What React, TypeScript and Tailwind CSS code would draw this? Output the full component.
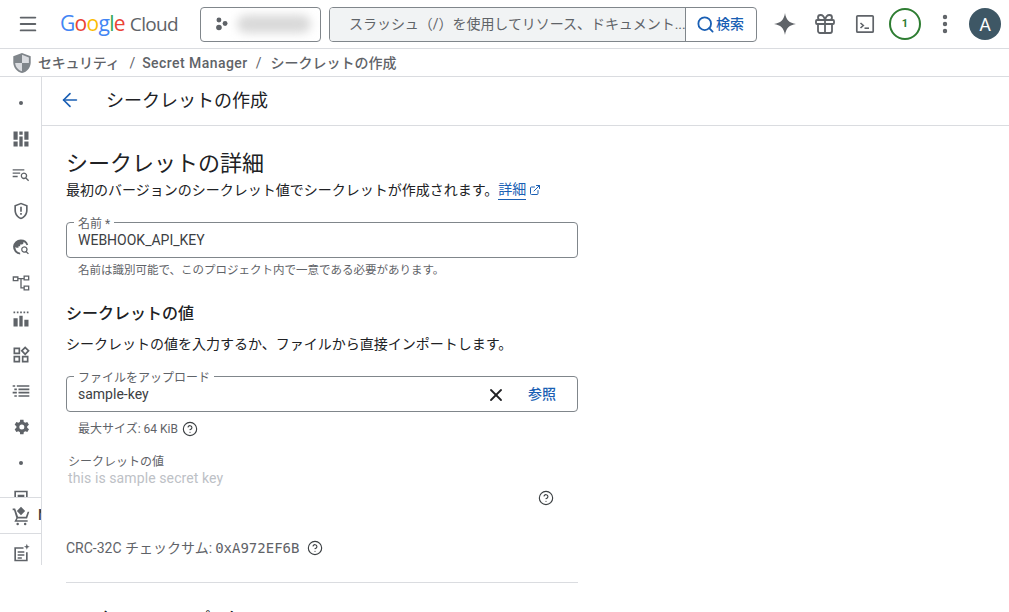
import { ArrowLeft, ExternalLink, Menu, MoreVertical, Search, X, Gift, CircleHelp } from 'lucide-react'

const sans = 'font-["Roboto","Noto_Sans_CJK_JP",sans-serif]'

function RailIcon({ d, className = '' }: { d: string; className?: string }) {
  return (
    <svg viewBox="0 0 24 24" className={`w-[20px] h-[20px] text-[#5f6368] ${className}`} fill="currentColor">
      <path d={d} />
    </svg>
  )
}

function Dot() {
  return <div className="w-[4px] h-[4px] rounded-full bg-[#5f6368]" />
}

const rail = {
  dashboard: 'M3 3h5v10H3zM10 3h4v4h-4zM16 3h5v10h-5zM10 9h4v12h-4zM3 15h5v6H3zM16 15h5v6h-5z',
  listSearch: 'M2 5h14v1.600H2zM2 9h9v1.600H2zM2 13h6v1.600H2zM15.500 9a4 4 0 0 1 3.200 6.400l3 3-1.100 1.100-3-3A4 4 0 1 1 15.500 9zm0 1.600a2.400 2.400 0 1 0 0 4.800 2.400 2.400 0 0 0 0-4.800z',
  shield: 'M12 2l8 3v6c0 5-3.400 9.400-8 11-4.600-1.600-8-6-8-11V5zm0 2L6 6.300V11c0 4 2.600 7.600 6 8.900 3.400-1.300 6-4.900 6-8.900V6.300zM11 7h2v6h-2zM11 14.500h2v2h-2z',
  globeSearch: 'M12 3a9 9 0 0 1 8.600 6.400l-1.900.6A7 7 0 0 0 15 5.700V7a2 2 0 0 1-2 2h-2v2H9v2H6.500L5.300 11.800A7 7 0 0 0 11 18.900V21A9 9 0 0 1 12 3zM16 11a4 4 0 0 1 3.200 6.400l2.300 2.300-1.100 1.100-2.300-2.300A4 4 0 1 1 16 11zm0 1.600a2.400 2.400 0 1 0 0 4.800 2.400 2.400 0 0 0 0-4.800z',
  tree: 'M2 4h7v6H2zm1.600 1.600v2.800h3.800V5.600zM15 3h7v6h-7zm1.600 1.600v2.800h3.800V4.600zM15 15h7v6h-7zm1.600 1.600v2.800h3.800v-2.800zM9 6h6v1.600h-2.200V17H15v1.600h-3.800V7.600H9z',
  bars: 'M3 3h2v2H3zM7 3h2v2H7zM11 3h2v2h-2zM15 3h2v2h-2zM19 3h2v2h-2zM3 11h5v10H3zM10 8h4v13h-4zM16 13h5v8h-5z',
  shapes: 'M3 3h8v8H3zm2 2v4h4V5zM17 1.500 22.500 7 17 12.500 11.500 7zm0 2.900L14.400 7l2.600 2.600L19.600 7zM3 13h8v8H3zm2 2v4h4v-4zM13 13h8v8h-8zm2 2v4h4v-4z',
  list: 'M2 5h3v2H2zM7 5h15v2H7zM4 9h3v2H4zM9 9h13v2H9zM2 13h5v2H2zM9 13h13v2H9zM4 17h3v2H4zM9 17h13v2H9z',
  gear: 'M19.400 13a7.500 7.500 0 0 0 0-2l2.100-1.600-2-3.500-2.500 1a7.500 7.500 0 0 0-1.700-1L15 3.200h-4l-.4 2.700a7.500 7.500 0 0 0-1.700 1l-2.500-1-2 3.500L6.500 11a7.500 7.500 0 0 0 0 2l-2.100 1.600 2 3.500 2.500-1a7.500 7.500 0 0 0 1.700 1l.4 2.700h4l.4-2.700a7.500 7.500 0 0 0 1.700-1l2.500 1 2-3.500zM13 15a3 3 0 1 1 0-6 3 3 0 0 1 0 6z',
  box: 'M4 2h16v20H4zm2 2v16h12V4zM8 7h8v6H8z',
  cart: 'M12 1l5 5-5 5-5-5zM2 3h3l3.500 10h9.300L20 7h2l-2.700 8H8l-1 2h13v2H4l2.400-4.500L3.600 5H2zM8 20a1.500 1.500 0 1 1 0 3 1.500 1.500 0 0 1 0-3zm9 0a1.500 1.500 0 1 1 0 3 1.500 1.500 0 0 1 0-3z',
  doc: 'M4 5h11v2H6v13h12v-9h2v11H4zM8 10h8v1.800H8zM8 13.500h8v1.800H8zM8 17h5v1.800H8zM19 1l1 2.500L22.500 4.500 20 5.500 19 8l-1-2.500L15.500 4.500 18 3.500z',
}

function RailRow({ children }: { children: React.ReactNode }) {
  return <div className="h-[36px] shrink-0 flex items-center justify-center">{children}</div>
}

function Outlined({ label, children }: { label: string; children: React.ReactNode }) {
  return (
    <div className="relative w-[512px] h-[36px] border border-[#80868b] rounded-[4px] flex items-center pl-[11px] pr-[21px] pt-[1px] text-[14px] text-[#3c4043]">
      <span className="absolute left-[7px] top-[-5px] bg-white px-[4px] text-[12px] leading-[13px] text-[#5f6368]">
        {label}
      </span>
      {children}
    </div>
  )
}

function Help({ className = '' }: { className?: string }) {
  return <CircleHelp className={`w-[16px] h-[16px] text-[#3c4043] ${className}`} strokeWidth={1.700} />
}

export default function App() {
  return (
    <div className={`w-[1009px] h-[612px] overflow-hidden bg-white flex flex-col ${sans}`}>
      {/* top bar */}
      <header className="h-[49px] shrink-0 border-b border-[#dadce0] flex items-center">
        <Menu className="ml-[17px] w-[22px] h-[22px] text-[#5f6368]" strokeWidth={2} />
        <div className='ml-[21px] w-[118px] flex items-baseline text-[21px] tracking-[-0.7px] font-["Open_Sans"] font-medium whitespace-nowrap'>
          <span className="text-[#4285f4]">G</span>
          <span className="text-[#ea4335]">o</span>
          <span className="text-[#fbbc04]">o</span>
          <span className="text-[#4285f4]">g</span>
          <span className="text-[#34a853]">l</span>
          <span className="text-[#ea4335]">e</span>
          <span className="ml-[5px] text-[19px] text-[#5f6368] font-normal">Cloud</span>
        </div>
        <div className="ml-[22px] w-[121px] h-[35px] border border-[#80868b] rounded-[4px] flex items-center pl-[14px]">
          <svg viewBox="0 0 16 16" className="w-[14px] h-[14px] text-[#5f6368]" fill="currentColor">
            <circle cx="4.500" cy="3.500" r="2.800" />
            <circle cx="11.500" cy="7.500" r="2.800" />
            <circle cx="4.500" cy="12" r="3.200" />
          </svg>
          <div className="ml-[8px] w-[74px] h-[18px] bg-[#d9d9d9] rounded-full blur-[5px]" />
        </div>
        <div className="ml-[8px] w-[428px] h-[35px] border border-[#80868b] rounded-[4px] flex overflow-hidden">
          <div className="w-[355px] bg-[#f1f3f4] pl-[19px] flex items-center text-[14px] tracking-[-0.04px] text-[#5f6368] whitespace-nowrap overflow-hidden">
            スラッシュ（/）を使用してリソース、ドキュメント...
          </div>
          <div className="flex-1 border-l border-[#80868b] flex items-center pl-[10px] gap-[1px] text-[#1a5fb4]">
            <Search className="w-[19px] h-[19px]" strokeWidth={2.300} />
            <span className="text-[14px] font-medium">検索</span>
          </div>
        </div>
        <svg viewBox="0 0 24 24" className="ml-[16px] w-[24px] h-[24px] text-[#5f6368]" fill="currentColor">
          <path d="M12 1c.8 6.500 4.500 10.200 11 11-6.500.8-10.200 4.500-11 11-.8-6.500-4.500-10.200-11-11 6.500-.8 10.200-4.500 11-11z" />
        </svg>
        <Gift className="ml-[16px] w-[24px] h-[24px] text-[#5f6368]" strokeWidth={1.800} />
        <svg viewBox="0 0 24 24" className="ml-[16px] w-[24px] h-[24px] text-[#5f6368]" fill="none" stroke="currentColor">
          <rect x="3.800" y="3.800" width="16.400" height="16.400" rx="1" strokeWidth="1.700" />
          <path d="M7.500 11l2.800 2.500-2.800 2.500" strokeWidth="1.600" />
          <path d="M11.500 16.200h4.500" strokeWidth="1.600" />
        </svg>
        <div className="ml-[12px] w-[32px] h-[32px] rounded-full border-2 border-[#2e7d32] flex items-center justify-center text-[11px] font-bold text-[#2e7d32]">
          1
        </div>
        <MoreVertical className="ml-[12px] w-[24px] h-[24px] text-[#5f6368]" strokeWidth={2.400} />
        <div className="ml-[12px] w-[32px] h-[32px] rounded-full bg-[#3e5765] flex items-center justify-center text-[18px] text-white">
          A
        </div>
      </header>

      {/* breadcrumbs */}
      <nav className="h-[28px] shrink-0 border-b border-[#dadce0] flex items-center pl-[11px] pt-[1px] text-[14px] font-medium text-[#5f6368] whitespace-nowrap">
        <svg viewBox="0 0 24 24" className="w-[22px] h-[22px]" fill="none">
          <path d="M12 1l9.500 3.500v7c0 5.500-4 10.300-9.500 11.500C6.500 21.800 2.500 17 2.500 11.500v-7z" fill="#80868b" />
          <path d="M12 3v9h7.500V6zM12 12v9C8 20 5 16.500 4.500 12z" fill="#dadce0" />
        </svg>
        <span className="ml-[5px] tracking-[-0.3px]">セキュリティ</span>
        <span className="ml-[10px] font-normal">/</span>
        <span className="ml-[7px] tracking-[0.45px]">Secret Manager</span>
        <span className="ml-[8px] font-normal">/</span>
        <span className="ml-[9px]">シークレットの作成</span>
      </nav>

      <div className="flex-1 flex min-h-0">
        {/* rail */}
        <aside className="relative w-[42px] shrink-0 h-[488px] border-r border-[#dadce0] pt-[8px] flex flex-col overflow-hidden">
          <RailRow><Dot /></RailRow>
          <RailRow><RailIcon d={rail.dashboard} /></RailRow>
          <RailRow><RailIcon d={rail.listSearch} /></RailRow>
          <RailRow><RailIcon d={rail.shield} /></RailRow>
          <RailRow><RailIcon d={rail.globeSearch} /></RailRow>
          <RailRow><RailIcon d={rail.tree} /></RailRow>
          <RailRow><RailIcon d={rail.bars} /></RailRow>
          <RailRow><RailIcon d={rail.shapes} /></RailRow>
          <RailRow><RailIcon d={rail.list} /></RailRow>
          <RailRow><RailIcon d={rail.gear} /></RailRow>
          <RailRow><Dot /></RailRow>
          <RailRow><RailIcon d={rail.box} /></RailRow>
          <div className="absolute left-0 right-0 top-[420px] h-[37px] bg-white border-y border-[#dadce0] flex items-center pl-[11px] whitespace-nowrap overflow-hidden">
            <RailIcon d={rail.cart} className="shrink-0" />
            <span className="ml-[7px] text-[14px] font-medium text-[#3c4043]">N</span>
          </div>
          <div className="absolute left-0 right-0 top-[457px] h-[31px] bg-white flex items-start justify-center pt-[9px]">
            <RailIcon d={rail.doc} />
          </div>
        </aside>

        <main className="flex-1 min-w-0">
          <div className="h-[49px] border-b border-[#dadce0] flex items-center pl-[17px] pb-[2px]">
            <ArrowLeft className="w-[22px] h-[22px] text-[#1a5fb4]" strokeWidth={1.800} />
            <h1 className="ml-[25px] text-[18px] text-[#202124]">シークレットの作成</h1>
          </div>

          <div className="pl-[24px] pt-[23px]">
            <h2 className="text-[22px] leading-[30px] text-[#202124]">シークレットの詳細</h2>
            <p className="text-[14px] leading-[20px] text-[#202124] flex items-center">
              最初のバージョンのシークレット値でシークレットが作成されます。
              <span className="text-[#1a5fb4] border-b border-[#1a5fb4]">詳細</span>
              <ExternalLink className="ml-[3px] w-[12px] h-[12px] text-[#1a5fb4]" />
            </p>

            <div className="mt-[22px]">
              <Outlined label="名前 *">WEBHOOK_API_KEY</Outlined>
            </div>
            <p className="mt-[5px] pl-[12px] text-[11.500px] leading-[14px] text-[#5f6368]">
              名前は識別可能で、このプロジェクト内で一意である必要があります。
            </p>

            <h3 className="mt-[26px] text-[16px] leading-[22px] font-medium text-[#202124]">シークレットの値</h3>
            <p className="mt-[9px] text-[14px] leading-[20px] text-[#202124]">
              シークレットの値を入力するか、ファイルから直接インポートします。
            </p>

            <div className="mt-[22px]">
              <Outlined label="ファイルをアップロード">
                <span className="flex-1">sample-key</span>
                <X className="w-[20px] h-[20px] text-[#202124]" strokeWidth={2.200} />
                <span className="ml-[22px] text-[#1a5fb4] font-medium">参照</span>
              </Outlined>
            </div>
            <div className="mt-[9px] pl-[12px] flex items-center text-[12px] leading-[16px] text-[#5f6368]">
              最大サイズ: 64 KiB
              <Help className="ml-[4px]" />
            </div>

            <div className="mt-[17px] pl-[2px] text-[12px] leading-[16px] text-[#5f6368]">シークレットの値</div>
            <div className="pl-[2px] text-[14px] leading-[16px] tracking-[0.1px] text-[#bdc1c6]">this is sample secret key</div>
            <div className="w-[512px] mt-[4px] pr-[24px] flex justify-end">
              <Help />
            </div>

            <div className="mt-[32px] flex items-center text-[14px] leading-[20px] text-[#5f6368]">
              CRC-32C チェックサム:
              <span className='ml-[3px] font-["DejaVu_Sans_Mono"] text-[14px]'>0xA972EF6B</span>
              <Help className="ml-[8px]" />
            </div>

            <div className="mt-[24px] w-[512px] border-t border-[#dadce0]" />
            <h3 className="mt-[25px] text-[16px] leading-[22px] font-medium text-[#202124]">シークレットのレプリケーション</h3>
          </div>
        </main>
      </div>
    </div>
  )
}
